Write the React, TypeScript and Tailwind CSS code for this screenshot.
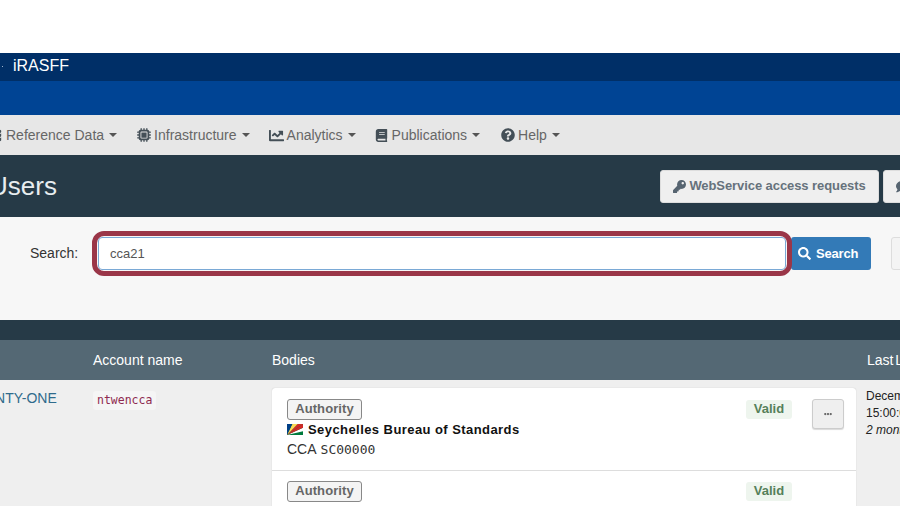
import type { ReactNode } from "react";
import { FaKey, FaSearch, FaBook, FaQuestionCircle, FaChartLine, FaDatabase, FaComment, FaEllipsisH } from "react-icons/fa";
import { FaMicrochip } from "react-icons/fa6";

const font = { fontFamily: '"Liberation Sans", Arial, sans-serif' };

function Caret() {
  return <span className="ml-[5px] inline-block h-0 w-0 border-x-[4px] border-t-[4px] border-x-transparent border-t-[#555]" />;
}

function NavItem({ icon, label, className }: { icon: ReactNode; label: string; className: string }) {
  return (
    <div className={`flex shrink-0 items-center text-[14px] text-[#666] ${className}`}>
      <span className="mr-[3px] flex w-[15px] justify-center text-[#444f57]">{icon}</span>
      {label}
      <Caret />
    </div>
  );
}

function Tag() {
  return (
    <div className="flex h-[21px] w-[75px] items-center justify-center rounded-[3px] border border-[#888] bg-[#f4f4f4] pb-[2px] text-[13px] font-bold tracking-[0.1px] text-[#666]">
      Authority
    </div>
  );
}

function Valid({ className }: { className: string }) {
  return (
    <div className={`absolute flex h-[19px] w-[46px] items-center justify-center rounded-[3px] bg-[#eef5ee] pb-[1px] text-[13px] font-bold text-[#55805a] ${className}`}>
      Valid
    </div>
  );
}

function Flag() {
  return (
    <svg width="16" height="11" viewBox="0 0 16 11" className="shrink-0">
      <rect width="16" height="11" fill="#007a3d" />
      <path d="M0 11 L16 3.7 V7.3 Z" fill="#fff" />
      <path d="M0 11 L16 0 V3.7 Z" fill="#d62828" />
      <path d="M0 11 L10.6 0 H16 Z" fill="#d62828" />
      <path d="M0 11 L10.6 0 H5.3 Z" fill="#fcd856" />
      <path d="M0 11 L5.3 0 H0 Z" fill="#003f87" />
    </svg>
  );
}

export default function App() {
  return (
    <div className="h-[506px] w-[900px] overflow-hidden bg-white" style={font}>
      <div className="h-[53px] bg-white" />

      <div className="flex h-[28px] items-center bg-[#002f67] pb-[2px] text-[16px] text-white">
        <span className="ml-[2px] mr-[10px] h-px w-px bg-[#9fb4cc]" />
        iRASFF
      </div>
      <div className="h-[34px] bg-[#004494]" />

      <div className="flex h-[40px] items-center bg-[#e7e7e7]">
        <NavItem className="-ml-[12px] mr-[19px]" icon={<FaDatabase className="text-[13px]" />} label="Reference Data" />
        <NavItem className="mr-[19px]" icon={<FaMicrochip className="text-[14px]" />} label="Infrastructure" />
        <NavItem className="mr-[18px]" icon={<FaChartLine className="text-[15px]" />} label="Analytics" />
        <NavItem className="mr-[20px]" icon={<FaBook className="text-[13px]" />} label="Publications" />
        <NavItem className="" icon={<FaQuestionCircle className="text-[14px]" />} label="Help" />
      </div>

      <div className="-ml-[11px] flex h-[62px] w-[954px] items-center justify-between bg-[#263a47]">
        <div className="text-[26px] text-[#e8edf0]">Users</div>
        <div className="flex">
          <div className="flex h-[33px] w-[219px] shrink-0 items-center justify-center rounded-[3px] border border-[#ddd] bg-[#efefef] text-[13px] font-bold tracking-[-0.08px] text-[#66727c]">
            <FaKey className="mr-[3px] text-[13px] text-[#566470]" />
            WebService access requests
          </div>
          <div className="ml-[4px] flex h-[33px] w-[60px] shrink-0 items-center rounded-[3px] border border-[#ddd] bg-[#efefef] pl-[12px]">
            <FaComment className="text-[13px] text-[#566470]" />
          </div>
        </div>
      </div>

      <div className="flex h-[103px] items-start bg-[#f7f7f7] pt-[20px]">
        <label className="ml-[30px] mr-[20px] flex h-[33px] w-[48px] items-center whitespace-nowrap text-[14px] text-[#333]">Search:</label>
        <div className="relative h-[33px] w-[688px] shrink-0 rounded-[4px] border border-[#7aa9d6] bg-white pl-[11px] text-[13px] leading-[31px] text-[#555]">
          cca21
          <div className="absolute -inset-x-[7px] -inset-y-[7px] rounded-[12px] border-[5px] border-[#9a3648]" />
        </div>
        <div className="ml-[5px] flex h-[33px] w-[80px] shrink-0 items-center rounded-[3px] bg-[#337ab7] pl-[7px] text-[13px] font-bold tracking-[-0.2px] text-white">
          <FaSearch className="mr-[5px] text-[13px]" />
          Search
        </div>
        <div className="ml-[20px] h-[33px] w-[20px] shrink-0 rounded-l-[3px] border border-[#ddd] bg-[#f4f4f4]" />
      </div>

      <div className="h-[20px] bg-[#263a47]" />

      <div className="flex h-[40px] items-center bg-[#546874] text-[14px] text-white">
        <div className="ml-[93px] w-[179px] shrink-0">Account name</div>
        <div className="w-[595px] shrink-0">Bodies</div>
        <div className="shrink-0 whitespace-nowrap [word-spacing:-2px]">Last Login</div>
      </div>

      <div className="flex h-[126px] bg-[#efefef] text-[14px]">
        <div className="w-[93px] shrink-0 pt-[10px] leading-[16px] text-[#2f6b8c]">
          <span className="-ml-[36px] block whitespace-nowrap">TWENTY-ONE</span>
        </div>
        <div className="w-[179px] shrink-0 pt-[9px]">
          <span className="inline-block h-[19px] rounded-[3px] bg-[#f5f5f5] px-[4px] font-['DejaVu_Sans_Mono',monospace] text-[11.5px] leading-[19px] text-[#8f2a4f]">
            ntwencca
          </span>
        </div>
        <div className="relative mt-[8px] h-[200px] w-[584px] shrink-0 rounded-[3px] bg-white shadow-[0_0_1px_rgba(0,0,0,0.25)]">
          <div className="h-[83px] border-b border-[#ddd] pl-[15px] pt-[11px]">
            <Tag />
            <div className="flex h-[19px] items-center text-[13px] font-bold tracking-[0.43px] text-[#111]">
              <Flag />
              <span className="ml-[5px]">Seychelles Bureau of Standards</span>
            </div>
            <div className="flex h-[20px] items-baseline text-[14px] text-[#333]">
              CCA
              <span className="ml-[4px] font-['DejaVu_Sans_Mono',monospace] text-[13px]">SC00000</span>
            </div>
          </div>
          <Valid className="left-[474px] top-[12px]" />
          <div className="absolute left-[540px] top-[11px] flex h-[30px] w-[32px] items-center justify-center rounded-[3px] border border-[#ccc] bg-[#efefef] shadow-[0_1px_1px_rgba(0,0,0,0.15)]">
            <FaEllipsisH className="text-[8px] text-[#666]" />
          </div>
          <div className="pl-[15px] pt-[10px]">
            <Tag />
          </div>
          <Valid className="left-[474px] top-[94px]" />
        </div>
        <div className="ml-[10px] shrink-0 whitespace-nowrap pt-[8px] text-[12px] leading-[17px] text-[#222]">
          <div>December</div>
          <div>15:00:00</div>
          <div className="italic">2 months</div>
        </div>
      </div>
    </div>
  );
}
